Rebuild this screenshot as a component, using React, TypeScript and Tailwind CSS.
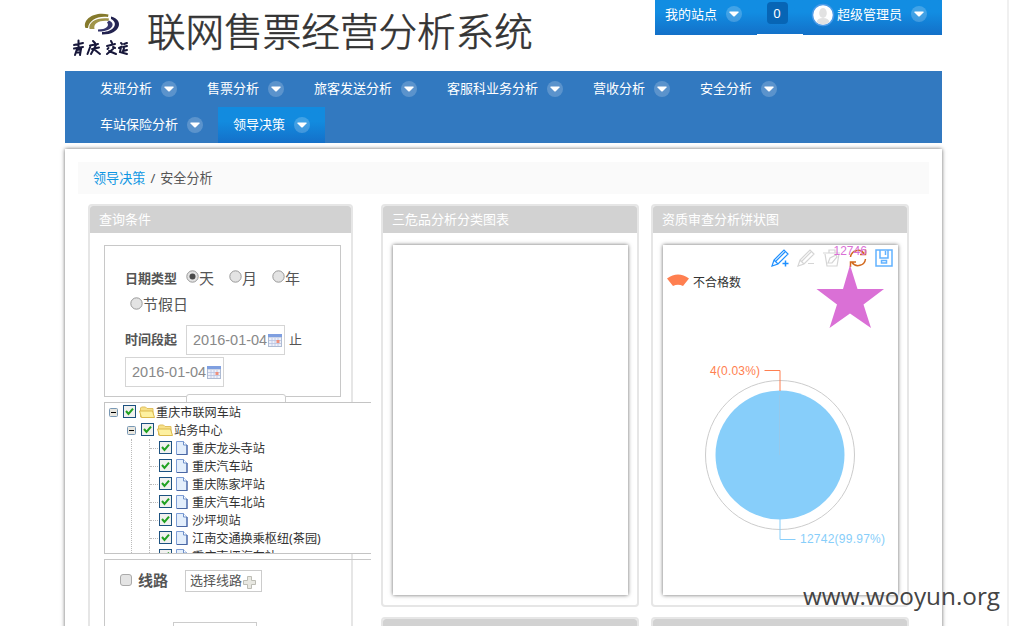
import React from "react";

const navItems = [
  "发班分析",
  "售票分析",
  "旅客发送分析",
  "客服科业务分析",
  "营收分析",
  "安全分析",
  "车站保险分析",
  "领导决策",
];

const stations = [
  "重庆龙头寺站",
  "重庆汽车站",
  "重庆陈家坪站",
  "重庆汽车北站",
  "沙坪坝站",
  "江南交通换乘枢纽(茶园)",
  "重庆南坪汽车站",
];

function Caret() {
  return (
    <svg className="size-4 shrink-0" viewBox="0 0 16 16">
      <circle cx="8" cy="8" r="8" fill="#fff" fillOpacity="0.2" />
      <path d="M3.500 5.500h9v1L8.500 10.500h-1l-4-4z" fill="#fff" />
    </svg>
  );
}

function Logo() {
  return (
    <svg className="h-[60px] w-[72px] shrink-0" viewBox="0 0 72 60" fill="none">
      <path d="M20.500 28C17 19 30 11 43.500 14.500L43 17C33 15.500 24 20 23 28z" fill="#857a2c" />
      <path d="M24.500 29C23 22 32 17 44 18.500L43.500 21C35 20 28 23 29.500 29z" fill="#a1954a" />
      <path d="M46 16.500C60 20 55 35 37 34.500V32C49 32 54 23 46 19z" fill="#22224f" />
      <path d="M44 20.500C52 24 46 32 33 31.500V29.500C41 29.500 45 26 42 22.500z" fill="#35356a" />
      <g stroke="#17173a" strokeWidth="2" strokeLinecap="round">
        <path d="M9 45l9-2M13.500 40.500v8M9 48.500l9-1.500M12 49l-2 6M12 50l4-1-1 6M11.500 52.500h3" />
        <path d="M28 41l2 2M25 45.500l8-1.500M25.500 46l-3 8M27 49l7-1.500M31 45l-5 9M30 50l5 4" />
        <path d="M46 41l1 2M42 46l8-2M43.500 48l-1 1M48 47l2 1M48 49l-6 5M44 51l7 3" />
        <path d="M56 43l1 1M54 48l2-1-1 5 7 2M59 44l3-1M58 47l4-1M59 48l-1 3 4-1" />
      </g>
    </svg>
  );
}

function CardHead({ title }: { title: string }) {
  return (
    <div className="h-[27px] shrink-0 rounded-t-[3px] bg-[#d2d2d2] pl-[9px] text-[13px] leading-[26px] text-white">
      {title}
    </div>
  );
}

function CalendarIcon() {
  return (
    <svg className="h-[13px] w-[14px] shrink-0" viewBox="0 0 14 13">
      <path d="M0 0h14v13H0z" fill="#aebbd3" />
      <path d="M0 0h14v3H0z" fill="#7f9fe0" />
      <path d="M1 3.500h12V12H1z" fill="#eef1fa" />
      <path d="M1 6.500h12M1 9.500h12M4 4v8M7 4v8M10 4v8" stroke="#b9c4e2" strokeWidth="0.800" />
      <path d="M8.500 6h3v3h-3z" fill="#ef8f7c" />
    </svg>
  );
}

function DateInput() {
  return (
    <div className="flex h-[30px] w-[99px] items-center border border-[#d5d5d5] pl-[6px] font-['Liberation_Sans',sans-serif] text-[14.5px] text-[#888]">
      <span className="w-[75px] pt-px">2016-01-04</span>
      <CalendarIcon />
    </div>
  );
}

function Radio({ label, checked }: { label: string; checked?: boolean }) {
  return (
    <label className="flex items-center text-[15px] leading-6 text-[#555]">
      <svg className="-mt-[5px] size-[13px]" viewBox="0 0 13 13">
        <circle cx="6.500" cy="6.500" r="5.700" fill="#e3e3e3" stroke="#999" />
        {checked && <circle cx="6.500" cy="6.500" r="3" fill="#4a4a4a" />}
      </svg>
      <span className="-mt-[3px]">{label}</span>
    </label>
  );
}

function Check() {
  return (
    <svg className="-mt-px size-[13px] shrink-0" viewBox="0 0 13 13">
      <rect x="0.500" y="0.500" width="12" height="12" fill="#f1f1ef" stroke="#1c5180" />
      <path d="M3 6l2.500 3L10 3.700" fill="none" stroke="#21a121" strokeWidth="2" />
    </svg>
  );
}

function Minus() {
  return (
    <svg className="ml-1 mr-[5px] size-[9px] shrink-0" viewBox="0 0 9 9">
      <rect x="0.500" y="0.500" width="8" height="8" rx="1" fill="#e8e6df" stroke="#7898b5" />
      <path d="M2 4.500h5" stroke="#000" />
    </svg>
  );
}

function Folder() {
  return (
    <svg className="ml-[3px] mr-px h-4 w-4 shrink-0" viewBox="0 0 16 16">
      <path d="M1.500 13V4l1-1h4l1.500 1.500h6V13z" fill="#f7e088" stroke="#e0c060" />
      <path d="M2.500 13.500L.500 7h13l2 6.500z" fill="#fdf0a0" stroke="#dbb94c" />
    </svg>
  );
}

function Page() {
  return (
    <svg className="mx-[3px] h-4 w-[14px] shrink-0" viewBox="0 0 14 16">
      <path d="M1.500 1.500h7l3.500 3.500v9.500H1.500z" fill="#e4effc" stroke="#7d9dd6" />
      <path d="M8.500 1.500V5H12" fill="#fff" stroke="#6d90cb" />
      <path d="M12 5v9.500H2" fill="none" stroke="#4a67a4" strokeWidth="1.200" />
    </svg>
  );
}

function PieChart() {
  return (
    <svg
      className="block h-[351px] w-[235px] font-['Liberation_Sans','Noto_Sans_CJK_SC',sans-serif] text-[12px]"
      viewBox="663 245 235 351"
    >
      <g fill="none" stroke="#1e90ff" strokeWidth="1.200">
        <path d="M772 266l2-6 10-10 4 4-10 10zM774 260l4 4M776 261l9-9" />
        <path d="M782.500 263.500h6M785.500 260.500v6" strokeWidth="1.500" />
      </g>
      <g fill="none" stroke="#d5d5d5" strokeWidth="1.200">
        <path d="M798 266l2-6 10-10 4 4-10 10zM800 260l4 4M802 261l9-9M808 263.500h6" />
        <path d="M823 253h17M829 253v-3h6v3M825 254l2 12h10l2-12M828 263l2-5 6-3 1 2-5 6z" />
      </g>
      <g fill="none" stroke="#d2691e" strokeWidth="1.500">
        <path d="M850.500 257a7.500 7.500 0 0 1 13.500-3.500M865.500 249.500v5h-5.500M865.500 259a7.500 7.500 0 0 1-13.500 3.500M850.500 267v-5h5.500" />
      </g>
      <g fill="none" stroke="#62b2ff" strokeWidth="1.500">
        <path d="M876 250h16v16h-16zM880 250v8h8v-8M885.500 251v4" />
        <rect x="881.500" y="260.500" width="5" height="2.500" />
      </g>
      <text x="833.500" y="255" fill="#da70d6">
        12746
      </text>
      <path
        d="M850 265l7.500 24H884l-20.500 15.500L871 328l-21-14.500L829.500 328l7.500-23.500L816.500 289H843z"
        fill="#da70d6"
      />
      <path d="M667 278.500q11-8 22 0l-6 7.500q-5-2.500-10 0z" fill="#ff7f50" />
      <text x="693" y="286.500" fill="#333">
        不合格数
      </text>
      <circle cx="780" cy="455" r="74.500" fill="none" stroke="#ccc" />
      <circle cx="780" cy="455" r="64.500" fill="#87cefa" />
      <path d="M779.500 395v60" stroke="#a5c4dc" strokeWidth="0.500" />
      <path d="M764.500 370.500h15.500V391" fill="none" stroke="#ff7f50" />
      <path d="M780 519v20.500h15.500" fill="none" stroke="#87cefa" />
      <text x="710" y="375" fill="#ff7f50" textLength="50">
        4(0.03%)
      </text>
      <text x="800" y="543" fill="#87cefa" textLength="85">
        12742(99.97%)
      </text>
    </svg>
  );
}

function ChartCard({ title, children }: { title: string; children?: React.ReactNode }) {
  return (
    <section className="flex h-[403px] w-[258px] flex-col rounded-sm border-2 border-[#e6e6e6]">
      <CardHead title={title} />
      <div className="ml-[10px] mt-3 h-[350px] w-[235px] bg-white shadow-[0_0_4px_rgba(0,0,0,0.6)]">
        {children}
      </div>
    </section>
  );
}

function QueryCard() {
  return (
    <section className="h-[460px] w-[265px] rounded-sm border-2 border-[#e6e6e6]">
      <CardHead title="查询条件" />
      <div className="ml-[14px] mt-3 h-[152px] w-[237px] border border-[#c8c8c8] pl-5 pt-5">
        <div className="flex h-[26px] items-center">
          <span className="mr-[9px] text-[13px] font-bold text-[#555]">日期类型</span>
          <div className="flex gap-[15px]">
            <Radio label="天" checked />
            <Radio label="月" />
            <Radio label="年" />
          </div>
        </div>
        <div className="flex h-[27px] items-center pl-[5px]">
          <Radio label="节假日" />
        </div>
        <div className="mt-[6px] flex items-center">
          <span className="mr-[9px] text-[13px] font-bold text-[#555]">时间段起</span>
          <DateInput />
          <span className="ml-1 text-[13px] text-[#555]">止</span>
        </div>
        <div className="mt-[2px]">
          <DateInput />
        </div>
        <div className="relative ml-[61px] mt-[7px] h-3 w-[100px] rounded-[3px] border border-[#ccc] bg-white" />
      </div>
      <div className="relative ml-[14px] mt-[5px] h-[152px] w-[267px] overflow-hidden border-y border-l border-[#c4c4c4] bg-white text-[12.15px] leading-[18px] text-[#333]">
        <div className="flex h-[18px] items-center">
          <Minus />
          <Check />
          <Folder />
          <span className="pt-px">重庆市联网车站</span>
        </div>
        <div className="flex h-[18px] items-center pl-[18px]">
          <Minus />
          <Check />
          <Folder />
          <span className="pt-px">站务中心</span>
        </div>
        <div className="ml-[26px] border-l border-dotted border-[#bbb] pl-[17px]">
          {stations.map((s) => (
            <div key={s} className="flex h-[18px] items-center whitespace-nowrap border-l border-dotted border-[#bbb]">
              <span className="mr-px w-2 border-t border-dotted border-[#bbb]" />
              <Check />
              <Page />
              <span className="pt-px">{s}</span>
            </div>
          ))}
        </div>
      </div>
      <div className="ml-[14px] mt-[5px] h-[67px] w-[267px] border-l border-t border-[#c8c8c8]">
        <div className="flex h-[42px] items-center pl-[15px]">
          <span className="-mt-[3px] mr-[6px] size-3 rounded-[3px] border border-[#aaa] bg-[#e4e4e4]" />
          <span className="-mt-px text-[15px] font-bold text-[#555]">线路</span>
          <span className="ml-[17px] flex h-[22px] w-[77px] items-center border border-[#ccc] pl-1 text-[13px] text-[#555]">
            选择线路
            <svg className="ml-px mt-[3px] size-[13px]" viewBox="0 0 13 13">
              <path d="M4.500.500h4v4h4v4h-4v4h-4v-4h-4v-4h4z" fill="#e8e8e2" stroke="#bdbdb5" />
            </svg>
          </span>
        </div>
        <div className="ml-[68px] mt-5 h-[5px] w-[84px] border-x border-t border-[#ccc]" />
      </div>
    </section>
  );
}

export default function App() {
  return (
    <div className="relative h-[626px] w-[1009px] overflow-hidden border-r-2 border-[#f0f0f0] bg-white pl-[65px] font-['Noto_Sans','Noto_Sans_CJK_SC',sans-serif]">
      <header className="flex h-[71px] w-[877px] items-start">
        <Logo />
        <h1 className="-mt-px ml-[10px] font-['Noto_Sans_CJK_SC',sans-serif] text-[38.6px] font-light leading-[60px] text-[#333] [-webkit-text-stroke:0.6px_#333]">
          联网售票经营分析系统
        </h1>
        <div className="ml-auto flex h-[35px] w-[287px] items-start bg-linear-to-b from-[#128de2] from-35% to-[#1370c8] text-[13px] leading-7 text-white">
          <div className="flex h-7 w-[102px] items-center gap-[9px] pl-[10px]">
            我的站点
            <Caret />
          </div>
          <div className="flex h-[35px] w-[46px] justify-center border-b border-white pr-[6px] pt-[2px]">
            <span className="h-[22px] w-[21px] rounded bg-[#0765b5] text-center leading-[22px]">0</span>
          </div>
          <div className="flex h-7 items-center pl-2">
            <svg className="mr-[2px] mt-[2px] size-6" viewBox="0 0 24 24">
              <circle cx="12" cy="12" r="10.500" fill="#fff" stroke="#4b9be8" strokeWidth="1.500" />
              <ellipse cx="12" cy="10" rx="3.800" ry="5" fill="#e2e2e2" />
              <path d="M5.500 19q1-4 6.500-4t6.500 4q-6.500 5-13 0" fill="#e2e2e2" />
            </svg>
            <span className="mr-[9px]">超级管理员</span>
            <Caret />
          </div>
        </div>
      </header>

      <nav className="flex h-[72px] w-[877px] flex-wrap bg-[#3279c0] px-5 pr-[120px]">
        {navItems.map((n) => (
          <a
            key={n}
            className={
              n === "领导决策"
                ? "flex h-9 items-center gap-[9px] bg-linear-to-b from-[#128bdf] from-40% to-[#1470c9] px-[15px] text-[13px] text-white"
                : "flex h-9 items-center gap-[9px] px-[15px] text-[13px] text-white"
            }
          >
            {n}
            <Caret />
          </a>
        ))}
      </nav>

      <main className="mt-[6px] h-[500px] w-[877px] bg-white px-[13px] pt-[13px] shadow-[0_0_4px_rgba(0,0,0,0.6)]">
        <div className="flex h-8 items-center gap-[5px] bg-[#fafafa] pl-[15px] pt-[2px] text-[13.1px] text-[#555]">
          <span className="text-[#0e97e3]">领导决策</span>
          <span>/</span>
          <span>安全分析</span>
        </div>
        <div className="mt-[10px] flex pl-[10px]">
          <QueryCard />
          <div className="ml-7 grid grid-cols-[258px_258px] content-start gap-x-3 gap-y-[10px]">
            <ChartCard title="三危品分析分类图表" />
            <ChartCard title="资质审查分析饼状图">
              <PieChart />
            </ChartCard>
            <ChartCard title="" />
            <ChartCard title="" />
          </div>
        </div>
      </main>

      <div className="absolute left-[803px] top-[579px] font-['Open_Sans',sans-serif] text-[24.3px] leading-[34px] text-[#444]">
        www.wooyun.org
      </div>
    </div>
  );
}
